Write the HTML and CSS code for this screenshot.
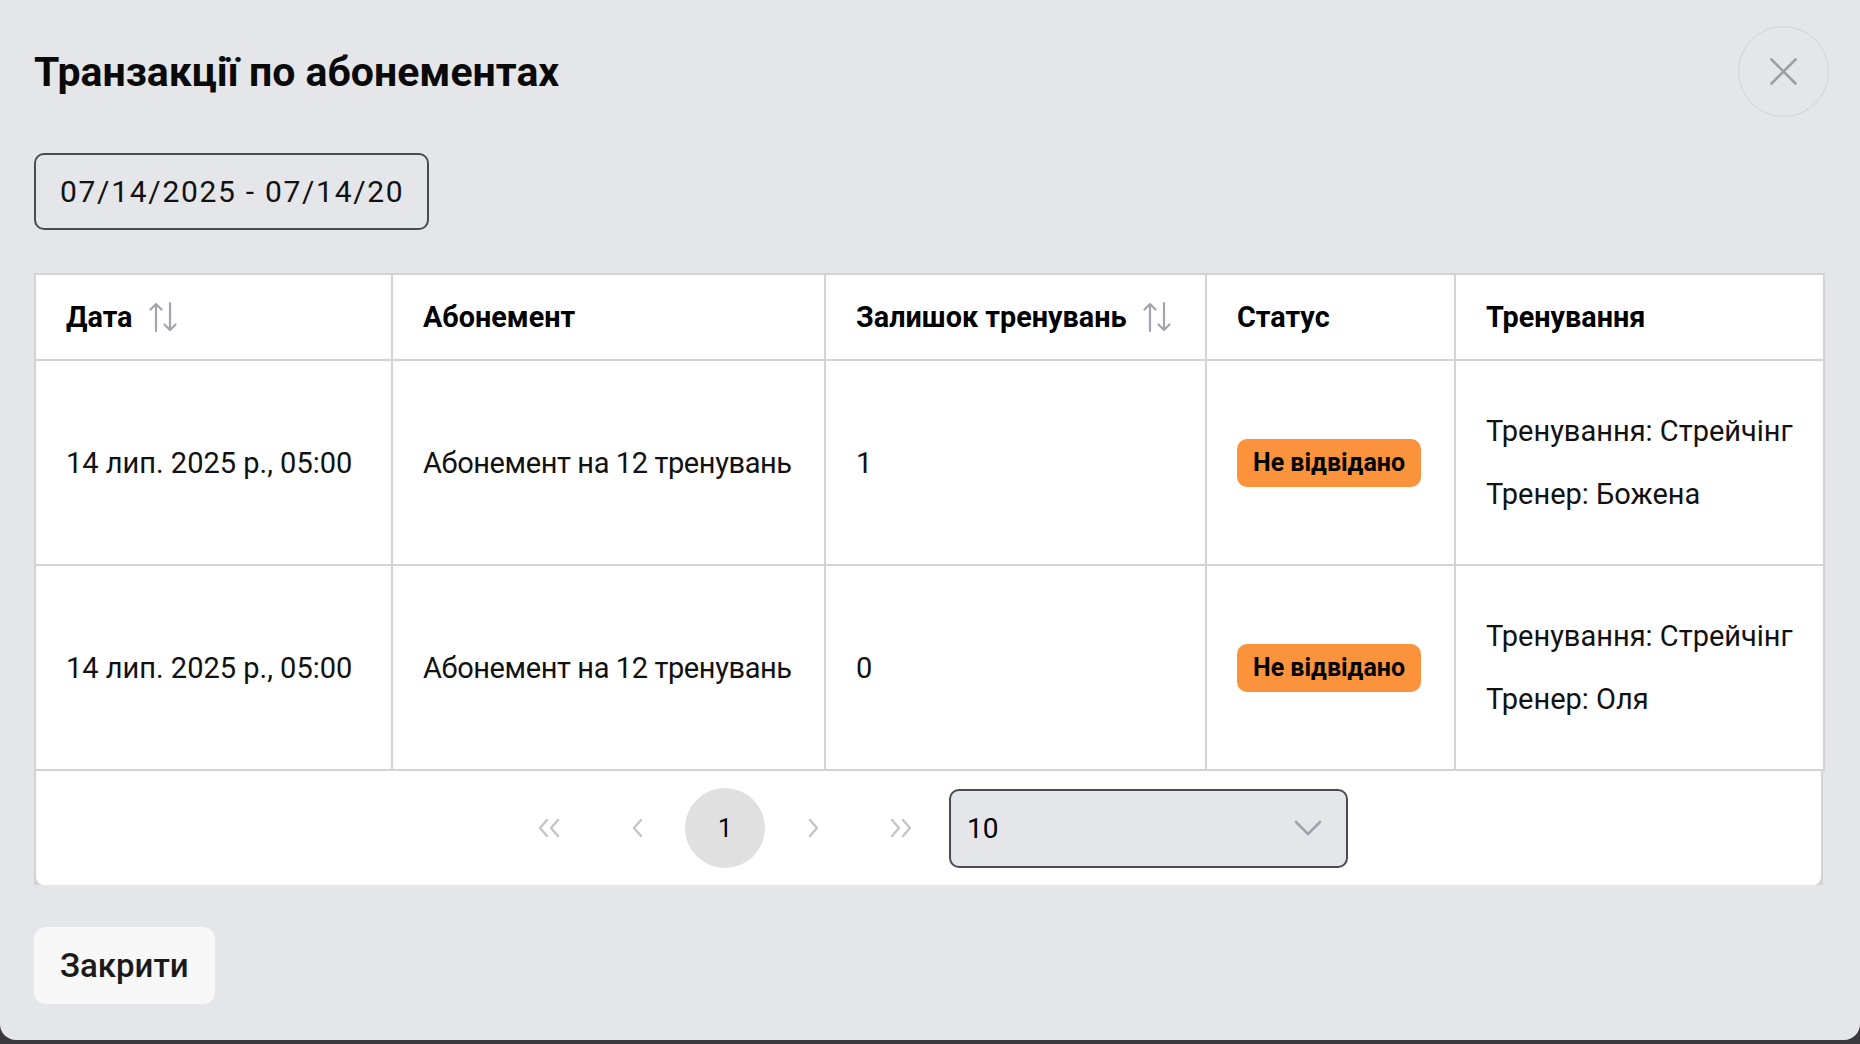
FILE: index.html
```html
<!DOCTYPE html>
<html lang="uk">
<head>
<meta charset="utf-8">
<title>Транзакції по абонементах</title>
<link rel="stylesheet" href="styles.css">
</head>
<body>
<div class="modal">
  <header class="modal-header">
    <h1 class="modal-title">Транзакції по абонементах</h1>
    <button class="close-x" aria-label="Закрити">
      <svg width="27" height="27" viewBox="0 0 27 27"><path d="M1.5 1.5L25.5 25.5M25.5 1.5L1.5 25.5" stroke="#9d9da5" stroke-width="2.6" stroke-linecap="round"/></svg>
    </button>
  </header>

  <div class="filters">
    <input class="date-range" type="text" value="07/14/2025 - 07/14/2025" readonly>
  </div>

  <div class="table-wrap">
    <table class="data-table">
      <colgroup>
        <col class="c1"><col class="c2"><col class="c3"><col class="c4"><col class="c5">
      </colgroup>
      <thead>
        <tr>
          <th><span class="th-inner">Дата <svg class="sort" width="30" height="32" viewBox="0 0 30 32"><path d="M8 30V3M2.5 8.5L8 3L13.5 8.5M22 2V29M16.5 23.5L22 29L27.5 23.5" fill="none" stroke="#a3a4ab" stroke-width="2.2" stroke-linecap="round" stroke-linejoin="round"/></svg></span></th>
          <th>Абонемент</th>
          <th><span class="th-inner">Залишок тренувань <svg class="sort" width="30" height="32" viewBox="0 0 30 32"><path d="M8 30V3M2.5 8.5L8 3L13.5 8.5M22 2V29M16.5 23.5L22 29L27.5 23.5" fill="none" stroke="#a3a4ab" stroke-width="2.2" stroke-linecap="round" stroke-linejoin="round"/></svg></span></th>
          <th>Статус</th>
          <th>Тренування</th>
        </tr>
      </thead>
      <tbody>
        <tr>
          <td>14 лип. 2025 р., 05:00</td>
          <td class="plan">Абонемент на 12 тренувань</td>
          <td>1</td>
          <td><span class="badge">Не відвідано</span></td>
          <td><p>Тренування: Стрейчінг</p><p>Тренер: Божена</p></td>
        </tr>
        <tr>
          <td>14 лип. 2025 р., 05:00</td>
          <td class="plan">Абонемент на 12 тренувань</td>
          <td>0</td>
          <td><span class="badge">Не відвідано</span></td>
          <td><p>Тренування: Стрейчінг</p><p>Тренер: Оля</p></td>
        </tr>
      </tbody>
    </table>
    <div class="pager">
      <button class="pg" aria-label="Перша"><svg width="26" height="20" viewBox="0 0 26 20"><path d="M11 2L4 10L11 18M22 2L15 10L22 18" fill="none" stroke="#c6c6ca" stroke-width="2.5" stroke-linecap="round" stroke-linejoin="round"/></svg></button>
      <button class="pg" aria-label="Попередня"><svg width="13" height="20" viewBox="0 0 13 20"><path d="M10 2L3 10L10 18" fill="none" stroke="#c6c6ca" stroke-width="2.5" stroke-linecap="round" stroke-linejoin="round"/></svg></button>
      <button class="pg active">1</button>
      <button class="pg" aria-label="Наступна"><svg width="13" height="20" viewBox="0 0 13 20"><path d="M3 2L10 10L3 18" fill="none" stroke="#c6c6ca" stroke-width="2.5" stroke-linecap="round" stroke-linejoin="round"/></svg></button>
      <button class="pg" aria-label="Остання"><svg width="26" height="20" viewBox="0 0 26 20"><path d="M4 2L11 10L4 18M15 2L22 10L15 18" fill="none" stroke="#c6c6ca" stroke-width="2.5" stroke-linecap="round" stroke-linejoin="round"/></svg></button>
      <div class="page-size">
        <span>10</span>
        <svg width="28" height="16" viewBox="0 0 28 16"><path d="M2 2L14 14L26 2" fill="none" stroke="#a1a1aa" stroke-width="2.6" stroke-linecap="round" stroke-linejoin="round"/></svg>
      </div>
    </div>
  </div>

  <footer class="modal-footer">
    <button class="btn-close">Закрити</button>
  </footer>
</div>
</body>
</html>
```

FILE: styles.css
```css
html, body {
  margin: 0;
  padding: 0;
}

body {
  background: #3a3a3c;
  font-family: Roboto, "Noto Sans", sans-serif;
  color: #111;
}

.modal {
  box-sizing: border-box;
  width: 1860px;
  height: 1040px;
  background: #e5e6e9;
  border-radius: 0 0 16px 16px;
  padding: 26px 37px 0 34px;
}

.modal-header {
  display: flex;
  align-items: center;
  justify-content: space-between;
  margin-right: -6px;
  height: 91px;
}

.modal-title {
  margin: 0;
  font-size: 41px;
  font-weight: 700;
  line-height: 46px;
  color: #0a0a0a;
}

.close-x {
  box-sizing: border-box;
  width: 91px;
  height: 91px;
  border-radius: 50%;
  border: 1.5px solid #d2d3d6;
  background: transparent;
  display: flex;
  align-items: center;
  justify-content: center;
  padding: 0;
}

.filters {
  margin-top: 36px;
}

.date-range {
  box-sizing: border-box;
  width: 395px;
  height: 77px;
  border: 2px solid #4b4c53;
  border-radius: 10px;
  background: transparent;
  padding: 0 24px;
  font-family: Roboto, sans-serif;
  font-size: 30px;
  letter-spacing: 1.7px;
  color: #111;
  outline: none;
  display: block;
}

.table-wrap {
  margin-top: 43px;
  background: #d3d3d6;
}

.data-table {
  width: 100%;
  border-collapse: collapse;
  table-layout: fixed;
  background: #fff;
}

.c1 { width: 357px; }
.c2 { width: 433px; }
.c3 { width: 381px; }
.c4 { width: 249px; }
.c5 { width: 369px; }

.data-table th,
.data-table td {
  border: 2px solid #d3d3d6;
  padding: 0 30px;
  text-align: left;
  vertical-align: middle;
  white-space: nowrap;
}

.data-table th {
  height: 84px;
  font-size: 28.8px;
  font-weight: 700;
  color: #000;
}

.th-inner {
  display: inline-flex;
  align-items: center;
  gap: 15px;
}

.data-table td {
  height: 203px;
  font-size: 29px;
  color: #111;
}

.data-table td.plan {
  letter-spacing: -0.4px;
}

.data-table td p {
  margin: 0;
  line-height: 43px;
}

.data-table td p + p {
  margin-top: 20px;
}

.badge {
  display: inline-block;
  height: 48px;
  line-height: 48px;
  padding: 0 16px;
  border-radius: 10px;
  background: #fb923c;
  font-size: 25px;
  font-weight: 700;
  color: #000;
}

.pager {
  display: flex;
  align-items: center;
  justify-content: center;
  gap: 8px;
  margin: 0 2px 2px 2px;
  padding: 17px 0;
  background: #fff;
  border-radius: 0 0 8px 8px;
}

.pg {
  width: 80px;
  height: 80px;
  display: flex;
  align-items: center;
  justify-content: center;
  border: none;
  background: transparent;
  padding: 0;
  font-family: Roboto, sans-serif;
  font-size: 25px;
  color: #000;
}

.pg.active {
  border-radius: 50%;
  background: #e0e0e0;
}

.page-size {
  box-sizing: border-box;
  width: 399px;
  height: 79px;
  border: 2px solid #4a4b52;
  border-radius: 10px;
  background: #e5e6e9;
  display: flex;
  align-items: center;
  justify-content: space-between;
  padding: 0 24px 0 16px;
  font-size: 28px;
  color: #000;
}

.modal-footer {
  margin-top: 42px;
}

.btn-close {
  height: 77px;
  padding: 0 26px;
  border: none;
  border-radius: 12px;
  background: #f7f7f8;
  font-family: Roboto, sans-serif;
  font-size: 33px;
  font-weight: 500;
  color: #1a1a1a;
}
```
